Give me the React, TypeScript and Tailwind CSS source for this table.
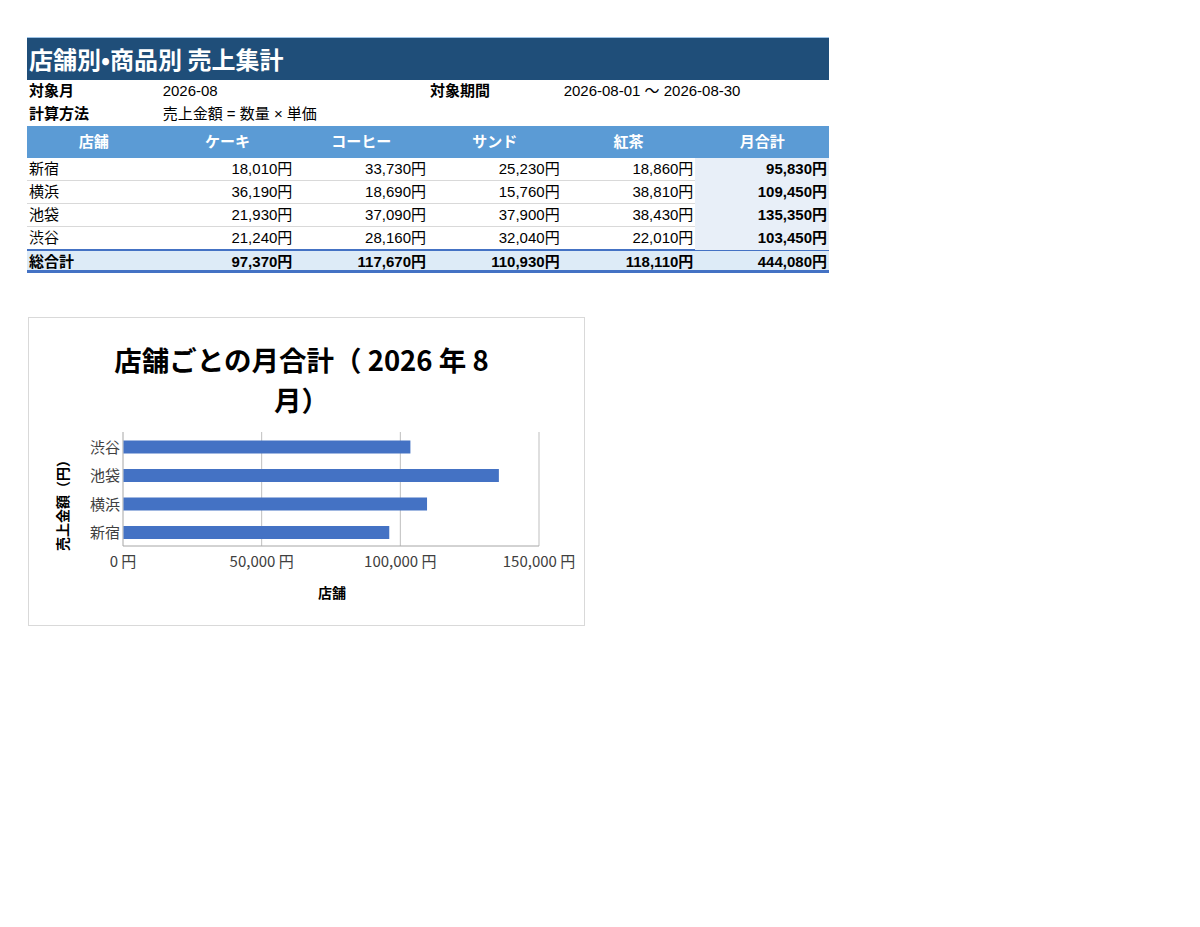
const rows = [
  { store: "新宿", cake: "18,010円", coffee: "33,730円", sand: "25,230円", tea: "18,860円", total: "95,830円" },
  { store: "横浜", cake: "36,190円", coffee: "18,690円", sand: "15,760円", tea: "38,810円", total: "109,450円" },
  { store: "池袋", cake: "21,930円", coffee: "37,090円", sand: "37,900円", tea: "38,430円", total: "135,350円" },
  { store: "渋谷", cake: "21,240円", coffee: "28,160円", sand: "32,040円", tea: "22,010円", total: "103,450円" },
];

// chart data, top to bottom as drawn
const bars = [
  { label: "渋谷", value: 103450 },
  { label: "池袋", value: 135350 },
  { label: "横浜", value: 109450 },
  { label: "新宿", value: 95830 },
];

const headers = ["店舗", "ケーキ", "コーヒー", "サンド", "紅茶", "月合計"];

const X0 = 94;
const X1 = 510;
const scale = (v: number) => X0 + ((X1 - X0) * v) / 150000;

function SalesChart() {
  return (
    <div className="mt-[44px] ml-px w-[557px] h-[309px] border border-[#d9d9d9] bg-white font-['Noto_Sans_CJK_JP',_sans-serif]">
      <div className="pt-[21px] pr-[10px] text-center text-[27.5px] leading-[40px] font-bold text-black">
        店舗ごとの月合計（ 2026 年 8
        <br />
        月）
      </div>
      <svg width="555" height="205" className="block">
        <g transform="translate(0 2)">
          {/* gridlines */}
          {[0, 50000, 100000, 150000].map((v) => (
            <line key={v} x1={scale(v)} x2={scale(v)} y1={11} y2={125} stroke={v === 0 ? "#a6a6a6" : "#bfbfbf"} strokeWidth={1} />
          ))}
          <line x1={X0} x2={X1} y1={125} y2={125} stroke="#a6a6a6" strokeWidth={1} />
          {bars.map((b, i) => {
            const cy = 26 + i * 28.5;
            return (
              <g key={b.label}>
                <rect x={X0 + 0.5} y={cy - 6.5} width={scale(b.value) - X0} height={13} fill="#4472c4" />
                <text x={X0 - 3} y={cy + 5.5} textAnchor="end" fontSize={15} fill="#404040">
                  {b.label}
                </text>
              </g>
            );
          })}
          {["0 円", "50,000 円", "100,000 円", "150,000 円"].map((t, i) => (
            <text key={t} x={scale(i * 50000)} y={146} textAnchor="middle" fontSize={15} fill="#404040">
              {t}
            </text>
          ))}
          <text x={303} y={177} textAnchor="middle" fontSize={14} fontWeight="bold" fill="#000">
            店舗
          </text>
          <text x={0} y={0} transform="translate(39 81) rotate(-90)" textAnchor="middle" fontSize={14} fontWeight="bold" fill="#000">
            売上金額（円）
          </text>
        </g>
      </svg>
    </div>
  );
}

export default function App() {
  const cell = "px-[2px] flex items-center";
  return (
    <div className="min-h-[927px] bg-white pt-[37px] pl-[27px] font-['Liberation_Sans',_'Noto_Sans_CJK_JP',_sans-serif] text-[15px] text-black">
      <div className="w-[802px]">
        {/* title */}
        <div className="h-[43px] border-t border-[#9dc3e6] bg-[#1f4e79] px-[2px] flex items-center text-[24px] font-bold text-white font-['Noto_Sans_CJK_JP',_sans-serif]">
          店舗別•商品別 売上集計
        </div>

        {/* info rows */}
        <div className="grid grid-cols-6 h-[23px]">
          <div className={`${cell} font-bold`}>対象月</div>
          <div className={`${cell} col-span-2`}>2026-08</div>
          <div className={`${cell} font-bold`}>対象期間</div>
          <div className={`${cell} col-span-2`}>2026-08-01 〜 2026-08-30</div>
        </div>
        <div className="grid grid-cols-6 h-[23px]">
          <div className={`${cell} font-bold`}>計算方法</div>
          <div className={`${cell} col-span-5`}>売上金額 = 数量 × 単価</div>
        </div>

        {/* header */}
        <div className="grid grid-cols-6 h-[32px] bg-[#5b9bd5] text-white font-bold">
          {headers.map((h) => (
            <div key={h} className="flex items-center justify-center">
              {h}
            </div>
          ))}
        </div>

        {/* body */}
        {rows.map((r, i) => (
          <div key={r.store} className={`grid grid-cols-6 ${i < rows.length - 1 ? "h-[23px] border-b border-[#d9d9d9]" : "h-[22px]"}`}>
            <div className={cell}>{r.store}</div>
            <div className={`${cell} justify-end`}>{r.cake}</div>
            <div className={`${cell} justify-end`}>{r.coffee}</div>
            <div className={`${cell} justify-end`}>{r.sand}</div>
            <div className={`${cell} justify-end`}>{r.tea}</div>
            <div className={`${cell} justify-end bg-[#e8eff8] font-bold`}>{r.total}</div>
          </div>
        ))}

        {/* total */}
        <div className="grid grid-cols-6 h-[24px] border-t-2 border-b-[3px] border-[#4472c4] bg-[#ddebf7] font-bold">
          <div className={cell}>総合計</div>
          <div className={`${cell} justify-end`}>97,370円</div>
          <div className={`${cell} justify-end`}>117,670円</div>
          <div className={`${cell} justify-end`}>110,930円</div>
          <div className={`${cell} justify-end`}>118,110円</div>
          <div className={`${cell} justify-end`}>444,080円</div>
        </div>
      </div>

      <SalesChart />
    </div>
  );
}
